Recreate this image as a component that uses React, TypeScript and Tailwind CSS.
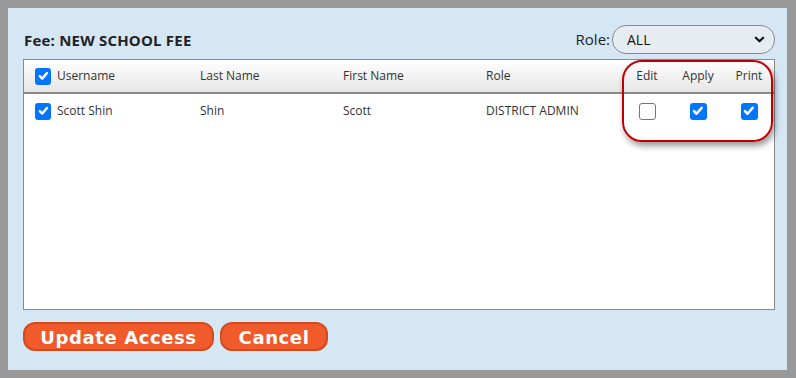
import React from 'react';

const font = { fontFamily: '"Open Sans", "Noto Sans", sans-serif' };

const Check: React.FC<{ checked: boolean; className?: string }> = ({ checked, className = '' }) =>
  checked ? (
    <span className={`flex items-center justify-center rounded-[3px] bg-[#0075ff] ${className}`}>
      <svg viewBox="0 0 16 16" className="w-[80%] h-[80%]" fill="none">
        <path d="M3.5 8.5 L6.5 11.5 L12.5 4.5" stroke="white" strokeWidth="3" strokeLinecap="round" strokeLinejoin="round" />
      </svg>
    </span>
  ) : (
    <span className={`block rounded-[3px] border border-[#767676] bg-white ${className}`} />
  );

export default function App() {
  return (
    <div className="w-[796px] h-[378px] bg-[#999999] pt-[8px] pl-[8px] pr-[9px] pb-[8px]" style={font}>
      <div className="h-full bg-[#d5e6f5] pl-[15px] pr-[12px] pt-[17px] flex flex-col">
        <div className="flex items-center justify-between h-[29px]">
          <h1 className="text-[15px] font-bold text-[#222] pl-[1px] pt-[2px] tracking-[0.2px]">Fee: NEW SCHOOL FEE</h1>
          <div className="flex items-center">
            <span className="text-[15px] text-[#222] mr-[2px]">Role:</span>
            <div className="w-[163px] h-[29px] rounded-[14px] border border-[#8a8a8a] bg-[#e7ecf3] flex items-center justify-between pl-[14px] pr-[9px]">
              <span className="text-[14px] text-[#111]">ALL</span>
              <svg viewBox="0 0 12 12" className="w-[11px] h-[11px]" fill="none">
                <path d="M2 4 L6 8 L10 4" stroke="#111" strokeWidth="2.4" strokeLinecap="round" strokeLinejoin="round" />
              </svg>
            </div>
          </div>
        </div>

        <div className="relative mt-[5px] h-[251px] border border-[#8a8a8a] bg-white text-[12px] text-[#333]">
          <div className="flex items-center h-[34px] border-b-2 border-[#8a8a8a] bg-gradient-to-b from-white to-[#e6e6e6] pl-[11px]">
            <Check checked className="w-[16px] h-[17px] mr-[6px]" />
            <span className="w-[143px]">Username</span>
            <span className="w-[143px]">Last Name</span>
            <span className="w-[143px]">First Name</span>
            <span className="w-[137px]">Role</span>
            <span className="w-[48px] text-center">Edit</span>
            <span className="w-[54px] text-center">Apply</span>
            <span className="w-[48px] text-center">Print</span>
          </div>
          <div className="flex items-center h-[34px] pl-[11px]">
            <Check checked className="w-[16px] h-[17px] mr-[6px]" />
            <span className="w-[143px]">Scott Shin</span>
            <span className="w-[143px]">Shin</span>
            <span className="w-[143px]">Scott</span>
            <span className="w-[137px]">DISTRICT ADMIN</span>
            <span className="w-[48px] flex justify-center">
              <Check checked={false} className="w-[17px] h-[17px]" />
            </span>
            <span className="w-[54px] flex justify-center">
              <Check checked className="w-[17px] h-[17px]" />
            </span>
            <span className="w-[48px] flex justify-center">
              <Check checked className="w-[17px] h-[17px]" />
            </span>
          </div>
          <div className="absolute left-[598px] top-[0px] w-[151px] h-[82px] rounded-[20px] border-2 border-[#c00000] shadow-[2px_4px_6px_rgba(0,0,0,0.4)]" />
        </div>

        <div className="flex gap-[6px] mt-[12px]">
          <button
            className="h-[29px] w-[191px] rounded-[12px] border-2 border-[#d24b1e] bg-[#f15a2a] text-white font-bold text-[18px] tracking-[0.6px]"
            style={{ fontFamily: '"DejaVu Sans", Verdana, sans-serif' }}
          >
            Update Access
          </button>
          <button
            className="h-[29px] w-[108px] rounded-[12px] border-2 border-[#d24b1e] bg-[#f15a2a] text-white font-bold text-[18px] tracking-[0.6px]"
            style={{ fontFamily: '"DejaVu Sans", Verdana, sans-serif' }}
          >
            Cancel
          </button>
        </div>
      </div>
    </div>
  );
}
